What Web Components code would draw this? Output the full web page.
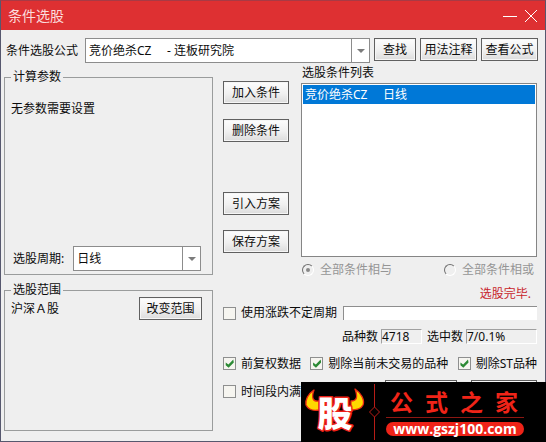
<!DOCTYPE html>
<html lang="zh-CN">
<head>
<meta charset="utf-8">
<title>条件选股</title>
<style>
  body {
    margin: 0;
    background: #efefef;
    color: #0c0c0c;
    font: 12px/14px "Noto Sans", "Noto Sans CJK SC", sans-serif;
  }
</style>
</head>
<body>
<dialog-window>
  <title-bar slot="title">条件选股</title-bar>

  <combo-field slot="formula" value="竞价绝杀CZ &nbsp;&nbsp;&nbsp; - 连板研究院">条件选股公式</combo-field>
  <push-button slot="formula">查找</push-button>
  <push-button slot="formula">用法注释</push-button>
  <push-button slot="formula">查看公式</push-button>

  <group-box slot="side" class="params">
    <span slot="legend">计算参数</span>
    <div class="note">无参数需要设置</div>
    <combo-field slot="footer" value="日线" class="period">选股周期:</combo-field>
  </group-box>
  <group-box slot="side">
    <span slot="legend">选股范围</span>
    <range-row>沪深Ａ股<push-button slot="action">改变范围</push-button></range-row>
  </group-box>

  <button-stack slot="actions">
    <push-button>加入条件</push-button>
    <push-button>删除条件</push-button>
    <push-button slot="scheme">引入方案</push-button>
    <push-button slot="scheme">保存方案</push-button>
  </button-stack>
  <condition-list slot="conditions">选股条件列表<li slot="item" role="option" aria-selected="true">竞价绝杀CZ&nbsp;&nbsp;&nbsp;&nbsp; 日线</li></condition-list>

  <run-options slot="options"></run-options>
  <site-banner slot="overlay"></site-banner>
</dialog-window>

<script>
function define(name, html) {
  const template = document.createElement("template");
  template.innerHTML = html;
  const Base = class extends HTMLElement {
    constructor() {
      super();
      this.attachShadow({ mode: "open" });
      this.shadowRoot.appendChild(template.content.cloneNode(true));
    }
  };
  // elements that read attributes are defined as classes below
  if (name) window.customElements.define(name, Base);
  return Base;
}

define("dialog-window", `
  <style>
    :host {
      display: flex;
      flex-direction: column;
      position: relative;
      box-sizing: border-box;
      min-height: 100vh;
      border: 1px solid #56586e;
      border-top-color: #a83a45;
      background: #efefef;
    }
    .formula {
      display: grid;
      grid-template-columns: 1fr 42px 57px 57px;
      gap: 4px;
      padding: 8px 7px 3px 5px;
    }
    .main {
      flex: 1;
      display: grid;
      grid-template-columns: 209px 1fr;
      gap: 10px;
      padding: 0 8px 10px 3px;
    }
    .side {
      display: grid;
      grid-template-rows: auto 1fr;
      gap: 8px;
      padding-top: 4px;
    }
    .top {
      display: grid;
      grid-template-columns: 66px 1fr;
      gap: 12px;
    }
    ::slotted(.params) { min-height: 205px; }
  </style>
  <slot name="title"></slot>
  <div class="formula"><slot name="formula"></slot></div>
  <div class="main">
    <div class="side"><slot name="side"></slot></div>
    <div>
      <div class="top"><slot name="actions"></slot><slot name="conditions"></slot></div>
      <slot name="options"></slot>
    </div>
  </div>
  <slot name="overlay"></slot>
`);

define("title-bar", `
  <style>
    :host {
      display: flex;
      align-items: center;
      height: 29px;
      padding: 0 7px;
      background: #de3032;
      color: #fbdcdc;
      font-size: 14px;
    }
    h1 { flex: 1; margin: 0; font: inherit; }
    button { display: block; padding: 0; border: 0; background: none; margin-left: 6px; }
    svg { display: block; stroke: #fff; fill: none; }
  </style>
  <h1><slot></slot></h1>
  <button aria-label="最小化"><svg width="15" height="14"><path d="M0 7.5H14"/></svg></button>
  <button aria-label="关闭"><svg width="14" height="14"><path d="M1 1L13 13M13 1L1 13"/></svg></button>
`);

define("push-button", `
  <style>
    :host { display: block; }
    button {
      display: block;
      width: 100%;
      height: 23px;
      padding: 0;
      border: 1px solid #606060;
      background: linear-gradient(#fdfdfd, #f0f0f0 55%, #dcdcdc);
      box-shadow: inset 0 0 0 1px #f6f6f6;
      color: inherit;
      font: inherit;
      white-space: nowrap;
    }
  </style>
  <button><slot></slot></button>
`);

const ComboBase = define(null, `
  <style>
    :host { display: flex; align-items: center; }
    label { flex: none; margin-right: var(--label-gap, 7px); }
    .box { position: relative; flex: 1; min-width: 0; }
    select {
      display: block;
      box-sizing: border-box;
      width: 100%;
      height: 25px;
      margin: 0;
      padding: 0 20px 0 3px;
      border: 1px solid #8c8c8c;
      border-radius: 0;
      background: #fff;
      color: inherit;
      font: inherit;
      appearance: none;
    }
    .arrow {
      position: absolute;
      top: 1px;
      right: 1px;
      bottom: 1px;
      width: 17px;
      border-left: 1px solid #8c8c8c;
      pointer-events: none;
    }
    svg { display: block; width: 17px; height: 23px; fill: #7c7c7c; }
  </style>
  <label for="choice"><slot></slot></label>
  <div class="box">
    <select id="choice"><option></option></select>
    <div class="arrow"><svg viewBox="0 0 17 23"><path d="M5 10h8l-4 4z"/></svg></div>
  </div>
`);

class ComboField extends ComboBase {
  connectedCallback() {
    this.shadowRoot.querySelector("option").textContent = this.getAttribute("value");
  }
}
window.customElements.define("combo-field", ComboField);

define("group-box", `
  <style>
    :host { display: grid; }
    fieldset {
      display: flex;
      flex-direction: column;
      min-width: 0;
      margin: 0;
      padding: 0 6px 3px;
      border: 1px solid #9a9c9c;
    }
    legend { padding: 0 2px; }
    .body { flex: 1; }
    ::slotted(.note) { padding-top: 18px; }
    ::slotted(.period) { --label-gap: 9px; padding: 0 5px 0 2px; }
  </style>
  <fieldset>
    <legend><slot name="legend"></slot></legend>
    <div class="body"><slot></slot></div>
    <slot name="footer"></slot>
  </fieldset>
`);

define("range-row", `
  <style>
    :host {
      display: grid;
      grid-template-columns: 1fr 63px;
      align-items: center;
      padding-right: 4px;
    }
  </style>
  <span><slot></slot></span>
  <slot name="action"></slot>
`);

define("button-stack", `
  <style>
    :host { display: block; padding-top: 15px; }
    .group { display: grid; gap: 15px; }
    .group + .group { margin-top: 50px; }
  </style>
  <div class="group"><slot></slot></div>
  <div class="group"><slot name="scheme"></slot></div>
`);

define("condition-list", `
  <style>
    :host { display: block; }
    .caption { padding: 0 1px 3px; }
    ul {
      box-sizing: border-box;
      height: 174px;
      margin: 0;
      padding: 1px;
      border: 1px solid #858585;
      background: #fff;
      list-style: none;
    }
    ::slotted(li) {
      padding: 2px;
      background: #0078d7;
      color: #fff;
      line-height: 15px;
    }
    .mode {
      display: flex;
      justify-content: space-between;
      padding: 6px 3px 0 1px;
      color: #959595;
    }
    .mode label { display: flex; align-items: center; gap: 6px; }
    input {
      display: grid;
      place-content: center;
      box-sizing: border-box;
      width: 12px;
      height: 12px;
      margin: 0;
      border: 1px solid;
      border-color: #707070 #fff #fff #707070;
      border-radius: 50%;
      appearance: none;
    }
    input:checked::before {
      content: "";
      width: 4px;
      height: 4px;
      border-radius: 50%;
      background: #888;
    }
  </style>
  <div class="caption" id="caption"><slot></slot></div>
  <ul role="listbox" aria-labelledby="caption"><slot name="item"></slot></ul>
  <div class="mode">
    <label><input type="radio" name="mode" checked disabled>全部条件相与</label>
    <label><input type="radio" name="mode" disabled>全部条件相或</label>
  </div>
`);

const CheckBase = define(null, `
  <style>
    :host { display: block; }
    label { display: flex; align-items: center; gap: 5px; white-space: nowrap; }
    input {
      display: grid;
      place-content: center;
      box-sizing: border-box;
      width: 13px;
      height: 13px;
      margin: 0;
      border: 1px solid #8e8f8f;
      background: #f6f5f0;
      appearance: none;
    }
    input:checked::before {
      content: "";
      width: 9px;
      height: 9px;
      background: #2c8a35;
      clip-path: polygon(8% 38%, 38% 60%, 92% 6%, 98% 38%, 40% 96%, 8% 70%);
    }
  </style>
  <label><input type="checkbox"><span><slot></slot></span></label>
`);

class CheckOption extends CheckBase {
  connectedCallback() {
    this.shadowRoot.querySelector("input").checked = this.hasAttribute("checked");
  }
}
window.customElements.define("check-option", CheckOption);

define("run-options", `
  <style>
    :host { display: block; }
    .status { padding: 10px 6px 5px; color: #c8242b; text-align: right; }
    .row { display: flex; align-items: center; }
    .cycle { gap: 6px; height: 14px; }
    .cycle input {
      flex: 1;
      box-sizing: border-box;
      min-width: 0;
      height: 14px;
      padding: 0;
      border: solid #8e8e8e;
      border-width: 1px 0 0 1px;
      background: #fff;
      font: inherit;
    }
    .stats { justify-content: flex-end; gap: 3px; padding: 9px 0 13px; }
    .stats output {
      box-sizing: border-box;
      width: 41px;
      height: 15px;
      border: 1px solid;
      border-color: #a0a0a0 #fff #fff #a0a0a0;
      line-height: 13px;
    }
    .stats output.wide { width: 71px; }
    .stats label + output + label { margin-left: 2px; }
    .checks { justify-content: space-between; height: 13px; }
    .run {
      display: grid;
      grid-template-columns: 1fr 72px 66px;
      gap: 14px;
      align-items: center;
      padding-top: 10px;
    }
  </style>
  <div class="status" role="status">选股完毕.</div>
  <div class="row cycle">
    <check-option>使用涨跌不定周期</check-option>
    <input type="text" aria-label="不定周期">
  </div>
  <div class="row stats">
    <label for="total">品种数</label><output id="total">4718</output>
    <label for="hits">选中数</label><output id="hits" class="wide">7/0.1%</output>
  </div>
  <div class="row checks">
    <check-option checked>前复权数据</check-option>
    <check-option checked>剔除当前未交易的品种</check-option>
    <check-option checked>剔除ST品种</check-option>
  </div>
  <div class="run">
    <check-option>时间段内满</check-option>
    <push-button></push-button>
    <push-button></push-button>
  </div>
`);

// banner laid over the lower right corner of the dialog
define("site-banner", `
  <style>
    :host {
      position: absolute;
      right: -1px;
      bottom: -1px;
      display: grid;
      grid-template-columns: 66px 16px 1fr;
      box-sizing: border-box;
      width: 245px;
      height: 60px;
      background: #000;
      color: #f02418;
    }
    svg { display: block; }
    .words { padding: 5px 22px 0 3px; }
    .name {
      padding: 0 4px;
      border-bottom: 1px solid #8c1712;
      font-size: 23px;
      font-weight: 700;
      line-height: 30px;
      white-space: pre;
    }
    a {
      display: block;
      margin-top: 4px;
      border-radius: 7px;
      background: #ee2318;
      color: #fff;
      font: 700 14px/14px "Open Sans", "Noto Sans", sans-serif;
      text-align: center;
      text-decoration: none;
    }
  </style>
  <svg width="66" height="60" viewBox="0 0 66 60">
    <g fill="#ffd800" stroke="#ee2a12" stroke-width="1.3" stroke-linejoin="round">
      <path d="M13 8C7 12 4 18 5 23C7 27 12 29 18 28L18 19C12 20 10 16 13 8Z"/>
      <path d="M54 7C60 11 64 18 62 23C60 27 56 28 50 28L50 19C56 19 57 15 54 7Z"/>
    </g>
    <text x="34" y="45" text-anchor="middle" font-family="Noto Sans CJK SC" font-size="35" font-weight="900"
      fill="#fff" stroke="#ee2018" stroke-width="3" stroke-linejoin="round" paint-order="stroke">股</text>
  </svg>
  <svg width="16" height="60" viewBox="0 0 16 60" fill="none" stroke="#b81d17">
    <path d="M7.5 2V25M7.5 35V58M7.5 25L12.5 30L7.5 35L2.5 30Z"/>
  </svg>
  <div class="words">
    <div class="name">公  式  之  家</div>
    <a href="#">www.gszj100.com</a>
  </div>
`);
</script>
</body>
</html>
